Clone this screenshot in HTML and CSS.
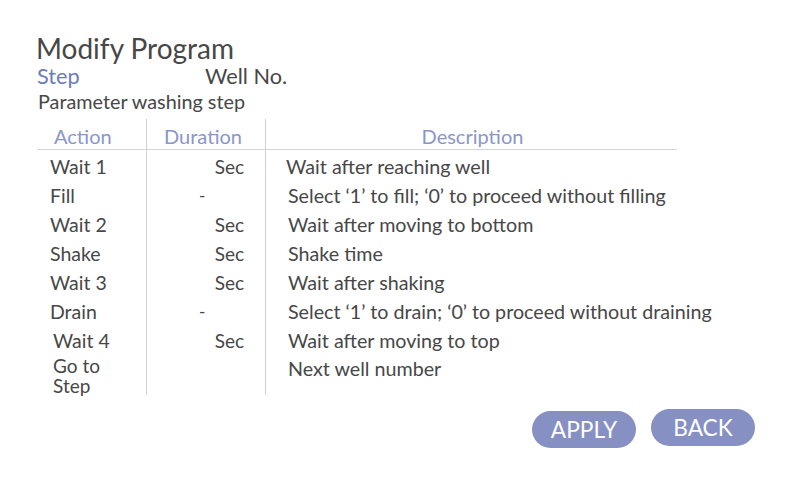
FILE: index.html
```html
<!DOCTYPE html>
<html>
<head>
<meta charset="utf-8">
<link rel="stylesheet" href="styles.css">
</head>
<body>
<div class="page">
  <h1 class="title">Modify Program</h1>
  <div class="subrow">
    <span class="step">Step</span>
    <span class="well">Well No.</span>
  </div>
  <div class="param">Parameter washing step</div>

  <div class="table">
    <div class="hcell c-action">Action</div>
    <div class="hcell c-dur">Duration</div>
    <div class="hcell c-desc">Description</div>

    <div class="cell c-action">Wait 1</div>
    <div class="cell c-dur"><span class="sec">Sec</span></div>
    <div class="cell c-desc first">Wait after reaching well</div>

    <div class="cell c-action">Fill</div>
    <div class="cell c-dur"><span class="dash">-</span></div>
    <div class="cell c-desc">Select ‘1’ to fill; ‘0’ to proceed without filling</div>

    <div class="cell c-action">Wait 2</div>
    <div class="cell c-dur"><span class="sec">Sec</span></div>
    <div class="cell c-desc">Wait after moving to bottom</div>

    <div class="cell c-action">Shake</div>
    <div class="cell c-dur"><span class="sec">Sec</span></div>
    <div class="cell c-desc">Shake time</div>

    <div class="cell c-action">Wait 3</div>
    <div class="cell c-dur"><span class="sec">Sec</span></div>
    <div class="cell c-desc">Wait after shaking</div>

    <div class="cell c-action">Drain</div>
    <div class="cell c-dur"><span class="dash">-</span></div>
    <div class="cell c-desc">Select ‘1’ to drain; ‘0’ to proceed without draining</div>

    <div class="cell c-action shift">Wait 4</div>
    <div class="cell c-dur"><span class="sec">Sec</span></div>
    <div class="cell c-desc">Wait after moving to top</div>

    <div class="cell last c-action shift goto"><div>Go to</div><div>Step</div></div>
    <div class="cell last c-dur"></div>
    <div class="cell last c-desc next">Next well number</div>
  </div>

  <div class="buttons">
    <button class="btn apply">APPLY</button>
    <button class="btn back">BACK</button>
  </div>
</div>
</body>
</html>
```

FILE: styles.css
```css
html, body {
  margin: 0;
  padding: 0;
  background: #ffffff;
}

body {
  width: 800px;
  height: 480px;
  overflow: hidden;
  font-family: Lato, "Open Sans", sans-serif;
  color: #4a4a4a;
}

.page {
  padding: 31px 0 0 36px;
}

.title {
  margin: 0;
  font-size: 28px;
  font-weight: 400;
  line-height: 34px;
  color: #474747;
}

.subrow {
  display: flex;
  font-size: 21.7px;
  line-height: 24px;
  margin-top: -1px;
}

.step {
  color: #6c7cb8;
  width: 168px;
  padding-left: 1px;
}

.well {
  color: #474747;
}

.param {
  font-size: 19.8px;
  line-height: 22px;
  padding-left: 2px;
  margin-top: 2px;
  color: #474747;
}

.table {
  display: grid;
  grid-template-columns: 108px 120px 411px;
  margin-top: 7px;
  margin-left: 2px;
  width: 639px;
}

.hcell {
  height: 30px;
  border-bottom: 1px solid #d4d4d4;
  font-size: 20px;
  line-height: 34px;
  color: #8a96c8;
}

.hcell.c-action {
  padding-left: 16px;
}

.hcell.c-dur {
  padding-left: 17px;
}

.hcell.c-desc {
  text-align: center;
  padding-left: 2px;
}

.c-dur {
  border-left: 1px solid #d0d0d0;
  border-right: 1px solid #d0d0d0;
}

.cell {
  height: 29px;
  font-size: 19.5px;
  line-height: 33px;
  color: #474747;
  white-space: nowrap;
}

.cell.c-action {
  padding-left: 12px;
}

.cell.c-action.shift {
  padding-left: 15px;
}

.sec {
  display: block;
  text-align: right;
  padding-right: 21px;
  font-size: 19px;
}

.dash {
  display: block;
  padding-left: 52px;
  font-size: 17px;
}

.cell.c-desc {
  padding-left: 22px;
  font-size: 19.7px;
}

.cell.c-desc.first {
  padding-left: 20px;
}

.cell.last {
  height: 42px;
}

.goto {
  display: flex;
  flex-direction: column;
  gap: 0;
  line-height: 20px;
  padding-top: 3px;
  font-size: 19px;
}

.next {
  line-height: 32px;
}

.buttons {
  display: flex;
  gap: 15px;
  margin-left: 496px;
  margin-top: 11px;
}

.btn {
  width: 104px;
  height: 37px;
  border: none;
  border-radius: 19px;
  background: #8690c3;
  color: #ffffff;
  font-family: Lato, "Open Sans", sans-serif;
  font-size: 22.7px;
  line-height: 37px;
  padding: 0;
}

.btn.apply {
  margin-top: 2px;
}

.btn.back {
  align-self: flex-start;
}
```
